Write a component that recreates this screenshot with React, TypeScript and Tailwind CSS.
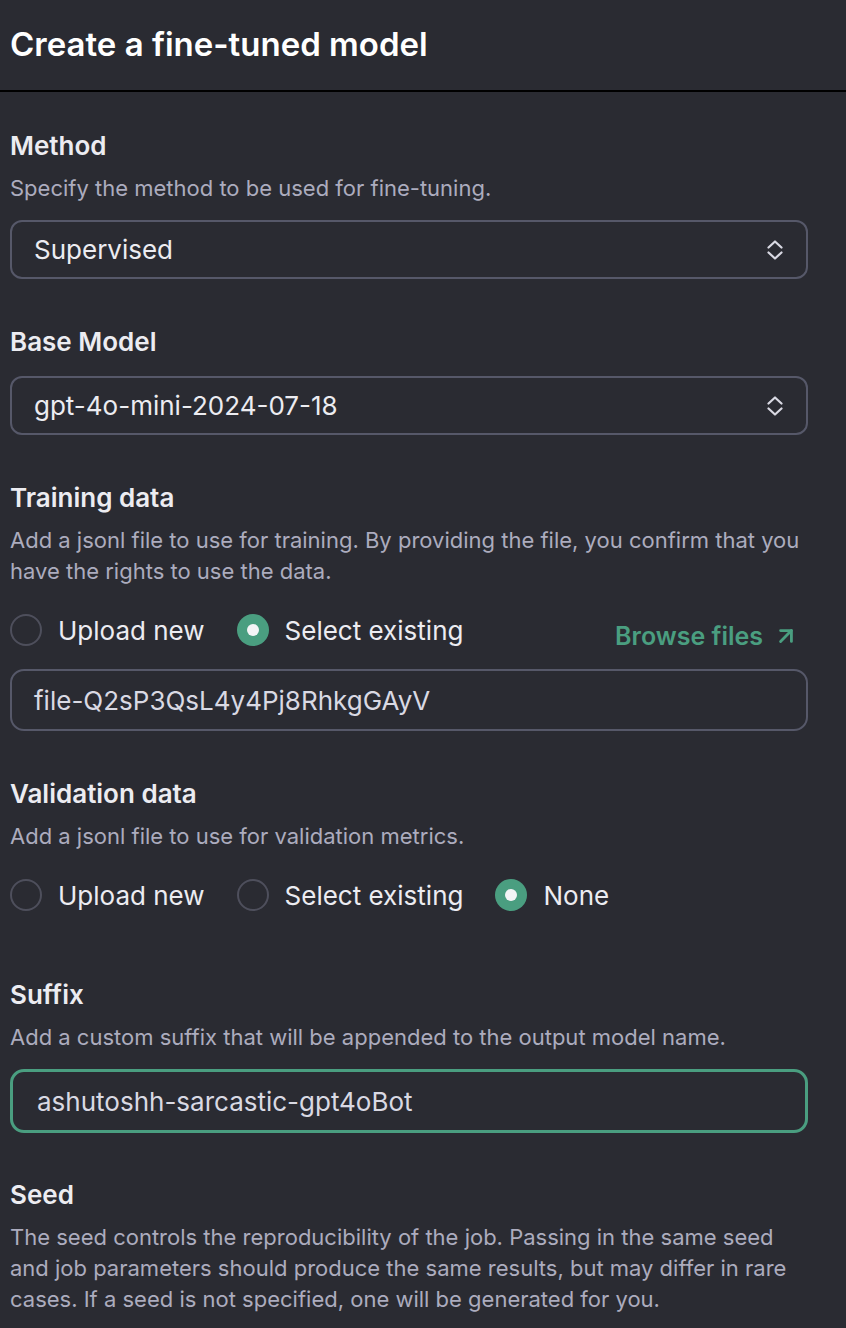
import { ArrowUpRight } from "lucide-react";

const font = { fontFamily: "Inter, 'Noto Sans', sans-serif" };

function Label({ children }: { children: React.ReactNode }) {
  return <h3 className="text-[26px] font-semibold leading-[34px] text-[#ececf1]">{children}</h3>;
}

function Desc({ children }: { children: React.ReactNode }) {
  return <p className="mt-[10px] text-[22px] leading-[31px] text-[#acacbe]">{children}</p>;
}

function UpDown() {
  return (
    <svg width="16" height="20" viewBox="0 0 16 20" fill="none" stroke="#d9d9e3" strokeWidth="2.2" strokeLinecap="round" strokeLinejoin="round">
      <path d="M1.5 7.5 L8 1.5 L14.5 7.5" />
      <path d="M1.5 12.5 L8 18.5 L14.5 12.5" />
    </svg>
  );
}

function Select({ value }: { value: string }) {
  return (
    <div className="flex h-[59px] items-center justify-between rounded-[12px] border-2 border-[#565869] pl-[22px] pr-[23px]">
      <span className="text-[26px] text-[#ececf1]">{value}</span>
      <UpDown />
    </div>
  );
}

function Radio({ label, checked }: { label: string; checked?: boolean }) {
  return (
    <label className="flex h-[34px] items-center gap-[16px]">
      {checked ? (
        <span className="flex h-[32px] w-[32px] items-center justify-center rounded-full bg-[#4a9e80]">
          <span className="h-[12px] w-[12px] rounded-full bg-[#f4f4f6]" />
        </span>
      ) : (
        <span className="h-[32px] w-[32px] rounded-full border-2 border-[#4e4f5c]" />
      )}
      <span className="text-[26px] text-[#ececf1]">{label}</span>
    </label>
  );
}

export default function App() {
  return (
    <div className="min-h-[1328px] bg-[#2a2b32]" style={font}>
      <header className="flex h-[92px] items-center border-b-2 border-black px-[10px]">
        <h1 className="text-[33px] font-semibold text-white">Create a fine-tuned model</h1>
      </header>

      <div className="w-[818px] px-[10px] pt-[37px]">
        <section>
          <Label>Method</Label>
          <Desc>Specify the method to be used for fine-tuning.</Desc>
          <div className="mt-[16px]">
            <Select value="Supervised" />
          </div>
        </section>

        <section className="mt-[46px]">
          <Label>Base Model</Label>
          <div className="mt-[17px]">
            <Select value="gpt-4o-mini-2024-07-18" />
          </div>
        </section>

        <section className="mt-[46px]">
          <Label>Training data</Label>
          <Desc>Add a jsonl file to use for training. By providing the file, you confirm that you have the rights to use the data.</Desc>
          <div className="mt-[26px] flex items-start justify-between">
            <div className="flex gap-[32px]">
              <Radio label="Upload new" />
              <Radio label="Select existing" checked />
            </div>
            <a className="mt-[6px] flex items-center gap-[10px] pr-[9px] text-[25px] font-semibold leading-[34px] text-[#4a9e80]">
              Browse files <ArrowUpRight size={26} strokeWidth={2.6} />
            </a>
          </div>
          <div className="mt-[16px] flex h-[62px] items-center rounded-[14px] border-2 border-[#565869] px-[22px]">
            <span className="text-[26px] text-[#d9d9e3]">file-Q2sP3QsL4y4Pj8RhkgGAyV</span>
          </div>
        </section>

        <section className="mt-[46px]">
          <Label>Validation data</Label>
          <Desc>Add a jsonl file to use for validation metrics.</Desc>
          <div className="mt-[26px] flex gap-[32px]">
            <Radio label="Upload new" />
            <Radio label="Select existing" />
            <Radio label="None" checked />
          </div>
        </section>

        <section className="mt-[66px]">
          <Label>Suffix</Label>
          <Desc>Add a custom suffix that will be appended to the output model name.</Desc>
          <div className="mt-[16px] flex h-[64px] items-center rounded-[14px] border-[3px] border-[#4a9e80] px-[24px]">
            <span className="text-[26px] text-[#d9d9e3]">ashutoshh-sarcastic-gpt4oBot</span>
          </div>
        </section>

        <section className="mt-[45px]">
          <Label>Seed</Label>
          <Desc>
            The seed controls the reproducibility of the job. Passing in the same seed and job parameters should produce the same results, but may differ in rare cases. If a seed is not specified, one will be generated for you.
          </Desc>
        </section>
      </div>
    </div>
  );
}
